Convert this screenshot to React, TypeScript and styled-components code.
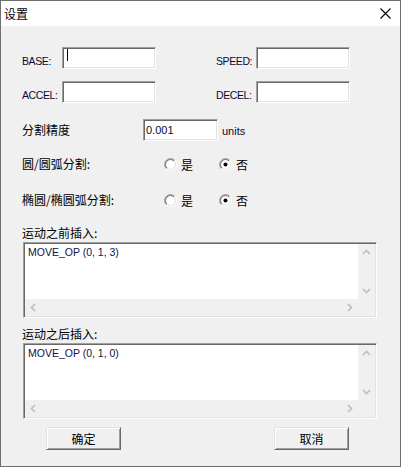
import React from "react";
import styled, { createGlobalStyle } from "styled-components";

const CJK = `"Noto Sans CJK SC", "Microsoft YaHei", sans-serif`;
const LATIN = `"Liberation Sans", Tahoma, "Noto Sans CJK SC", sans-serif`;

const GlobalStyle = createGlobalStyle`
  html, body { margin: 0; padding: 0; background: #f0f0f0; }
  body { font-family: ${LATIN}; }
  *, *::before, *::after { box-sizing: border-box; }
`;

/* classic 3D edges */
const sunken = `
  border: 1px solid;
  border-color: #a0a0a0 #ffffff #ffffff #a0a0a0;
  box-shadow: inset 1px 1px #696969, inset -1px -1px #e3e3e3;
  padding: 1px;
`;

const Window = styled.div`
  width: 401px;
  height: 467px;
  border: 1px solid #6f6f6f;
  background: #f0f0f0;
  display: flex;
  flex-direction: column;
  overflow: hidden;
`;

const TitleBar = styled.div`
  flex: none;
  height: 25px;
  background: #ffffff;
  display: flex;
  align-items: center;
  justify-content: space-between;
  padding: 0 9px 0 3px;
  font-family: ${CJK};
  font-size: 12px;
  color: #000;
`;

const Body = styled.div`
  flex: 1;
  display: flex;
  flex-direction: column;
  padding: 21px 0 0 21px;
`;

const FieldRow = styled.div<{ $mt?: number }>`
  display: flex;
  gap: 60px;
  margin-top: ${(p) => p.$mt ?? 0}px;
`;

const FieldGroup = styled.div`
  display: flex;
  align-items: center;
`;

const LatinLabel = styled.span`
  width: 40px;
  margin-top: 6px;
  font-family: ${LATIN};
  font-size: 10.5px;
  letter-spacing: -0.4px;
  line-height: 12px;
  color: #0a0a30;
  white-space: nowrap;
`;

const Field = styled.div<{ $w: number }>`
  ${sunken}
  width: ${(p) => p.$w}px;
  height: 22px;
  background: #ffffff;
  display: flex;
  align-items: center;
  padding-left: 2px;
  font-family: ${LATIN};
  font-size: 11px;
  color: #0a0a30;
`;

const Caret = styled.span`
  display: block;
  width: 1px;
  height: 12px;
  margin: -6px 0 0 2px;
  background: #000;
`;

const PrecisionRow = styled.div`
  display: flex;
  align-items: center;
  margin-top: 16px;
`;

const CjkLabel = styled.span<{ $w?: number }>`
  width: ${(p) => (p.$w ? `${p.$w}px` : "auto")};
  flex: none;
  font-family: ${CJK};
  font-size: 12px;
  line-height: 16px;
  color: #000;
  white-space: nowrap;
`;

const Units = styled.span`
  margin: 2px 0 0 4px;
  font-family: ${LATIN};
  font-size: 11px;
  color: #0a0a30;
`;

const RadioRow = styled.div<{ $mt: number }>`
  display: flex;
  align-items: center;
  height: 20px;
  margin-top: ${(p) => p.$mt}px;
`;

const Option = styled.label`
  width: 55px;
  display: flex;
  align-items: center;
  gap: 4px;
  font-family: ${CJK};
  font-size: 12px;
  color: #000;
`;

const SectionLabel = styled.div<{ $mt: number }>`
  margin-top: ${(p) => p.$mt}px;
  font-family: ${CJK};
  font-size: 12px;
  line-height: 16px;
  color: #000;
`;

const ScrollBox = styled.div`
  ${sunken}
  margin: 1px 0 0 1px;
  width: 354px;
  height: 76px;
  display: grid;
  grid-template-columns: 1fr 17px;
  grid-template-rows: 1fr 17px;
  background: #f0f0f0;
`;

const TextArea = styled.div`
  background: #ffffff;
  padding: 2px 3px;
  font-family: ${LATIN};
  font-size: 10.5px;
  line-height: 13px;
  color: #12124a;
`;

const VScroll = styled.div`
  display: flex;
  flex-direction: column;
  justify-content: space-between;
  background: #f0f0f0;
`;

const HScroll = styled.div`
  display: flex;
  justify-content: space-between;
  background: #f0f0f0;
`;

const ArrowBox = styled.div`
  width: 17px;
  height: 17px;
  display: flex;
  align-items: center;
  justify-content: center;
`;

const Corner = styled.div`
  background: #f0f0f0;
`;

const ButtonRow = styled.div`
  display: flex;
  gap: 153px;
  margin: 8px 0 0 24px;
`;

const Button = styled.button`
  width: 75px;
  height: 23px;
  padding: 0;
  border: 1px solid;
  border-color: #e3e3e3 #696969 #696969 #e3e3e3;
  box-shadow: inset 1px 1px #ffffff, inset -1px -1px #a0a0a0;
  background: #f0f0f0;
  font-family: ${CJK};
  font-size: 12px;
  color: #000;
  display: flex;
  align-items: center;
  justify-content: center;
`;

const CloseIcon = () => (
  <svg width="11" height="11" viewBox="0 0 11 11">
    <path d="M0.5 0.5 L10.5 10.5 M10.5 0.5 L0.5 10.5" stroke="#000" strokeWidth="1.1" />
  </svg>
);

const RadioMark = ({ checked }: { checked?: boolean }) => {
  const half = (r: number) => {
    const d = r / Math.SQRT2;
    return {
      tl: `M ${6.5 - d} ${6.5 + d} A ${r} ${r} 0 0 1 ${6.5 + d} ${6.5 - d}`,
      br: `M ${6.5 + d} ${6.5 - d} A ${r} ${r} 0 0 1 ${6.5 - d} ${6.5 + d}`,
    };
  };
  const outer = half(6);
  const inner = half(5);
  return (
    <svg width="13" height="13" viewBox="0 0 13 13">
      <circle cx="6.5" cy="6.5" r="4.6" fill="#fff" />
      <path d={outer.tl} stroke="#a0a0a0" fill="none" />
      <path d={outer.br} stroke="#ffffff" fill="none" />
      <path d={inner.tl} stroke="#696969" fill="none" />
      <path d={inner.br} stroke="#e3e3e3" fill="none" />
      {checked && <circle cx="6.5" cy="6.5" r="2" fill="#000" />}
    </svg>
  );
};

type Dir = "up" | "down" | "left" | "right";
const Chevron = ({ dir }: { dir: Dir }) => {
  const pts: Record<Dir, string> = {
    up: "1,6 4.5,2.5 8,6",
    down: "1,3 4.5,6.5 8,3",
    left: "6,1 2.5,4.5 6,8",
    right: "3,1 6.5,4.5 3,8",
  };
  return (
    <svg width="9" height="9" viewBox="0 0 9 9">
      <polyline points={pts[dir]} fill="none" stroke="#bfbfbf" strokeWidth="1.7" />
    </svg>
  );
};

const ScrollText = ({ text }: { text: string }) => (
  <ScrollBox>
    <TextArea>{text}</TextArea>
    <VScroll>
      <ArrowBox><Chevron dir="up" /></ArrowBox>
      <ArrowBox><Chevron dir="down" /></ArrowBox>
    </VScroll>
    <HScroll>
      <ArrowBox><Chevron dir="left" /></ArrowBox>
      <ArrowBox><Chevron dir="right" /></ArrowBox>
    </HScroll>
    <Corner />
  </ScrollBox>
);

const YesNo = ({ label, mt }: { label: string; mt: number }) => (
  <RadioRow $mt={mt}>
    <CjkLabel $w={142}>{label}</CjkLabel>
    <Option><RadioMark />是</Option>
    <Option><RadioMark checked />否</Option>
  </RadioRow>
);

export default function App() {
  return (
    <>
      <GlobalStyle />
      <Window>
        <TitleBar>
          <span>设置</span>
          <CloseIcon />
        </TitleBar>
        <Body>
          <FieldRow>
            <FieldGroup>
              <LatinLabel>BASE:</LatinLabel>
              <Field $w={94}><Caret /></Field>
            </FieldGroup>
            <FieldGroup>
              <LatinLabel>SPEED:</LatinLabel>
              <Field $w={94} />
            </FieldGroup>
          </FieldRow>
          <FieldRow $mt={12}>
            <FieldGroup>
              <LatinLabel>ACCEL:</LatinLabel>
              <Field $w={94} />
            </FieldGroup>
            <FieldGroup>
              <LatinLabel>DECEL:</LatinLabel>
              <Field $w={94} />
            </FieldGroup>
          </FieldRow>
          <PrecisionRow>
            <CjkLabel $w={121}>分割精度</CjkLabel>
            <Field $w={75}>0.001</Field>
            <Units>units</Units>
          </PrecisionRow>
          <YesNo label="圆/圆弧分割:" mt={13} />
          <YesNo label="椭圆/椭圆弧分割:" mt={16} />
          <SectionLabel $mt={15}>运动之前插入:</SectionLabel>
          <ScrollText text="MOVE_OP (0, 1, 3)" />
          <SectionLabel $mt={8}>运动之后插入:</SectionLabel>
          <ScrollText text="MOVE_OP (0, 1, 0)" />
          <ButtonRow>
            <Button>确定</Button>
            <Button>取消</Button>
          </ButtonRow>
        </Body>
      </Window>
    </>
  );
}
